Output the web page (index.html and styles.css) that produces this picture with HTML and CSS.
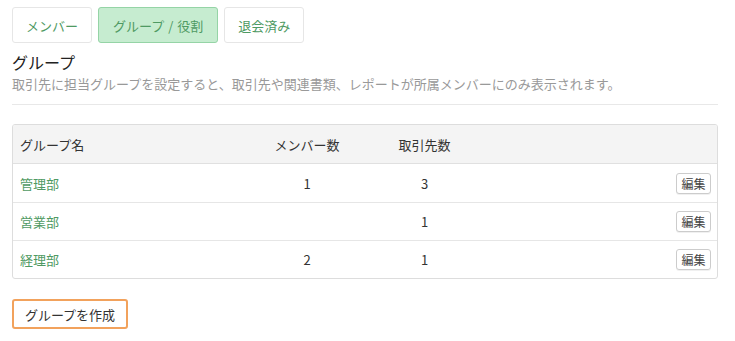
FILE: index.html
```html
<!DOCTYPE html>
<html lang="ja">
<head>
<meta charset="utf-8">
<link rel="stylesheet" href="styles.css">
</head>
<body>
<div class="page">
  <nav class="tabs">
    <a class="tab">メンバー</a>
    <a class="tab active">グループ / 役割</a>
    <a class="tab">退会済み</a>
  </nav>
  <h2 class="title">グループ</h2>
  <p class="desc">取引先に担当グループを設定すると、取引先や関連書類、レポートが所属メンバーにのみ表示されます。</p>
  <div class="table">
    <div class="row head">
      <div class="cell name">グループ名</div>
      <div class="cell num">メンバー数</div>
      <div class="cell num">取引先数</div>
      <div class="cell act"></div>
    </div>
    <div class="row">
      <div class="cell name"><a class="link">管理部</a></div>
      <div class="cell num">1</div>
      <div class="cell num">3</div>
      <div class="cell act"><button class="edit">編集</button></div>
    </div>
    <div class="row">
      <div class="cell name"><a class="link">営業部</a></div>
      <div class="cell num"></div>
      <div class="cell num">1</div>
      <div class="cell act"><button class="edit">編集</button></div>
    </div>
    <div class="row last">
      <div class="cell name"><a class="link">経理部</a></div>
      <div class="cell num">2</div>
      <div class="cell num">1</div>
      <div class="cell act"><button class="edit">編集</button></div>
    </div>
  </div>
  <button class="create">グループを作成</button>
</div>
</body>
</html>
```

FILE: styles.css
```css
* { box-sizing: border-box; }
body {
  margin: 0;
  background: #fff;
  font-family: "Noto Sans CJK JP", "Noto Sans", sans-serif;
  color: #333;
}
.page {
  width: 706px;
  margin-left: 12px;
  padding-top: 7px;
}
.tabs {
  display: flex;
  gap: 6px;
}
.tab {
  display: flex;
  align-items: center;
  justify-content: center;
  height: 36px;
  padding: 0 13px;
  font-size: 13px;
  color: #4f9a63;
  background: #fff;
  border: 1px solid #e6e6e6;
  border-radius: 3px;
}
.tab.active {
  background: #c6ecd0;
  border-color: #95d4a6;
  padding: 0 14px;
  word-spacing: 1px;
}
.title {
  margin: 9px 0 0;
  font-size: 16px;
  line-height: 20px;
  font-weight: 400;
  color: #222;
}
.desc {
  margin: 3px 0 0;
  font-size: 13px;
  line-height: 18px;
  color: #999;
  padding-bottom: 11px;
  border-bottom: 1px solid #e8e8e8;
}
.table {
  margin-top: 19px;
  border: 1px solid #ddd;
  border-radius: 3px;
  overflow: hidden;
}
.row {
  display: grid;
  grid-template-columns: 235px 118px 117px 1fr;
  height: 38px;
  align-items: center;
  border-top: 1px solid #e6e6e6;
  font-size: 13px;
}
.row.head {
  height: 39px;
  border-top: none;
  background: #f4f4f4;
  border-bottom: 1px solid #e0e0e0;
  color: #333;
}
.row.head + .row { border-top: none; }
.cell.name { padding-left: 7px; }
.cell.num { text-align: center; }
.cell.act {
  display: flex;
  justify-content: flex-end;
  padding-right: 6px;
}
.link { color: #4f9a63; }
.edit {
  height: 21px;
  width: 35px;
  padding: 0;
  font-family: inherit;
  font-size: 12px;
  color: #444;
  background: #fff;
  border: 1px solid #ccc;
  border-radius: 3px;
  box-shadow: 0 1px 0 rgba(0,0,0,0.06);
}
.create {
  display: block;
  margin-top: 20px;
  width: 116px;
  height: 30px;
  padding: 0;
  font-family: inherit;
  font-size: 13px;
  color: #333;
  background: #fff;
  border: 2px solid #f2a25c;
  border-radius: 3px;
}
```
